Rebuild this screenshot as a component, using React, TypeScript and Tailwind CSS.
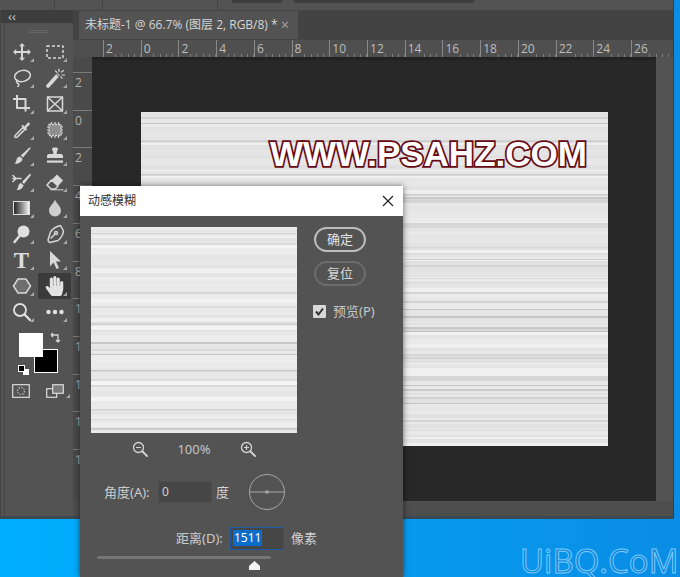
import React from "react";
import { FaHandPaper } from "react-icons/fa";

const UI = { fontFamily: '"Open Sans","Noto Sans CJK SC",sans-serif' };
const CJK = { fontFamily: '"Noto Sans","Noto Sans CJK SC",sans-serif' };

function stripes(seed: number, height: number, base: number) {
  let s = seed;
  const rnd = () => {
    s = (s * 1664525 + 1013904223) % 4294967296;
    return s / 4294967296;
  };
  const stops: string[] = [];
  let y = 0;
  while (y < height) {
    const r = rnd();
    let h = 1 + Math.floor(rnd() * 4);
    let v = base + Math.floor(rnd() * 12) - 4;
    if (r < 0.09) {
      v = base - 36 + Math.floor(rnd() * 14);
      h = 1 + Math.floor(rnd() * 2);
    } else if (r < 0.26) {
      v = base - 18 + Math.floor(rnd() * 8);
      h = 1 + Math.floor(rnd() * 2);
    } else if (r > 0.86) {
      v = Math.min(248, base + 12);
    }
    const c = `rgb(${v},${v},${v})`;
    stops.push(`${c} ${y}px`, `${c} ${y + h}px`);
    y += h;
  }
  return `linear-gradient(to bottom, ${stops.join(",")})`;
}

const S = { stroke: "#d8d8d8", fill: "none", strokeWidth: 1.5, strokeLinecap: "round" as const, strokeLinejoin: "round" as const };
const F = { fill: "#d8d8d8" };

const icons: Record<string, React.ReactNode> = {
  move: (
    <g>
      <path d="M10 3v14M3 10h14" {...S} strokeWidth={2} />
      <path d="M10 1l3 3.2H7zM10 19l3-3.2H7zM1 10l3.2-3v6zM19 10l-3.2-3v6z" {...F} />
    </g>
  ),
  marquee: <rect x="2" y="4" width="16" height="12" {...S} strokeLinecap="butt" strokeDasharray="3 2" />,
  lasso: (
    <g {...S}>
      <ellipse cx="10.5" cy="8" rx="8" ry="5.5" transform="rotate(-12 10.5 8)" />
      <path d="M5 12c-1 2 0 3 1 3.5s1 2 0 3" />
    </g>
  ),
  wand: (
    <g>
      <path d="M3 18L12 8" stroke="#d8d8d8" strokeWidth="3.6" strokeLinecap="round" />
      <path d="M12 8l2-2" stroke="#9a9a9a" strokeWidth="3.6" />
      <path d="M14 1v2.6M16.5 4l2-1.5M17 7h2.6M10.5 3l1.4 1.4M17 10l-1-1" {...S} strokeWidth={1.2} />
    </g>
  ),
  crop: <path d="M5 1v13h13M1 5h12.5v12.5" {...S} strokeWidth={2} strokeLinecap="butt" />,
  frame: (
    <g {...S} strokeLinecap="butt">
      <rect x="2.5" y="3" width="15" height="14" />
      <path d="M2.5 3l15 14M17.5 3l-15 14" />
    </g>
  ),
  dropper: (
    <g>
      <path d="M11 7.5L3.6 15c-1 1.2-1 2.6.2 2.4 1 0 1.4-.3 2-1L13 9.4z" {...S} />
      <path d="M11 5l1.5 1.5 3-3.5c1.2-1.6 3.4.7 1.8 2L14 8l1.4 1.4-1.3 1.1-5-5z" {...F} />
    </g>
  ),
  chip: (
    <g>
      <rect x="4" y="4.5" width="12" height="11" fill="#8d8d8d" stroke="#d8d8d8" strokeWidth="1.4" strokeDasharray="2 1" />
      <path d="M6.5 2v2M10 2v2M13.5 2v2M6.5 16v2M10 16v2M13.5 16v2M2 7h2M2 10h2M2 13h2M16 7h2M16 10h2M16 13h2" stroke="#d8d8d8" strokeWidth="1.2" />
    </g>
  ),
  brush: (
    <g {...F}>
      <path d="M17.5 1.5c.8-.3 1.3.3 1 1L11 11.5 8.8 9.5z" />
      <path d="M8 10.5l2.5 2.2c-.2 3-4 5.5-8 5 2-1.500 1.500-3.200 2.300-5 .7-1.200 2-2 3.200-2.200z" />
    </g>
  ),
  stamp: (
    <g {...F}>
      <path d="M7 2.5c0-1.500 6-1.500 6 0 0 2-1.500 3-1.300 5.500H16c1.500 0 2 1 2 2.500v1.500H2v-1.500C2 9 2.500 8 4 8h4.300C8.500 5.500 7 4.500 7 2.500z" />
      <rect x="2" y="14.5" width="16" height="2.2" />
    </g>
  ),
  history: (
    <g>
      <path d="M18 1.5L10 10l2 2 7-9z" {...F} />
      <path d="M9 11l2.5 2.2c-.3 2.500-3 5-7 4.800 1.500-1.300 1.500-3 2-4.500.5-1.300 1.500-2.200 2.500-2.500z" {...F} />
      <path d="M1 6.5h8M1 3.500l3 3-3 3" {...S} strokeWidth={1.6} />
    </g>
  ),
  eraser: (
    <g>
      <path d="M12 2.5l6 6-5 5.500-6.500-6z" {...F} />
      <path d="M6.5 8l6.500 6-2.800 3H6L2 13z" {...S} />
      <path d="M6 17.8h12" {...S} strokeWidth={1} />
    </g>
  ),
  drop: <path d="M10 1.5c1 3.500 6 7 6 11a6 6 0 0 1-12 0c0-4 5-7.500 6-11z" fill="#cfcfcf" />,
  dodge: (
    <g>
      <circle cx="11.5" cy="7.5" r="6" fill="#e0e0e0" />
      <path d="M7.5 12L2.5 18" stroke="#e0e0e0" strokeWidth="2.4" strokeLinecap="round" />
    </g>
  ),
  pen: (
    <g {...S}>
      <path d="M15.5 1.5l3 5.500c-.5 4-3 7.500-5.500 9.500l-8 2c-1.500-.5-2-1.500-2-2.500l2.500-8c2-3 6-5.500 10-6.500z" />
      <path d="M6 14l3.500-3.500" />
      <circle cx="11" cy="9" r="1.5" />
    </g>
  ),
  arrow: <path d="M5 1l11 10.500h-5l3 6.500-2.500 1-3-6.500L5 16.500z" fill="#d8d8d8" />,
  hexagon: <path d="M6 3h8l4.500 7-4.500 7H6l-4.500-7z" fill="#6e6e6e" stroke="#d8d8d8" strokeWidth="1.5" />,
  zoom: (
    <g>
      <circle cx="8" cy="8" r="6" fill="none" stroke="#e0e0e0" strokeWidth="1.8" />
      <path d="M12.5 12.5L18 18" stroke="#e0e0e0" strokeWidth="2.4" strokeLinecap="round" />
    </g>
  ),
  dots: (
    <g fill="#e0e0e0">
      <circle cx="3.5" cy="10" r="2.2" />
      <circle cx="10" cy="10" r="2.2" />
      <circle cx="16.5" cy="10" r="2.2" />
    </g>
  ),
};

function Corner() {
  return (
    <span className="absolute right-[4px] bottom-[3px] w-0 h-0 border-l-[4px] border-l-transparent border-b-[4px] border-b-[#a8a8a8]" />
  );
}

function Tool({ name, active }: { name: string; active?: boolean }) {
  return (
    <div className={`relative w-[33px] h-[26px] flex items-center justify-center ${active ? "bg-[#3b3b3b] rounded-[1px]" : ""}`}>
      {name === "T" ? (
        <span className="text-[23px] leading-none font-bold text-[#dcdcdc]" style={{ fontFamily: '"Liberation Serif",serif' }}>
          T
        </span>
      ) : name === "hand" ? (
        <FaHandPaper className="w-[19px] h-[20px] text-[#e4e4e4]" />
      ) : name === "gradient" ? (
        <div className="w-[17px] h-[14px] border border-[#dcdcdc] bg-gradient-to-r from-[#2a2a2a] to-[#f4f4f4]" />
      ) : (
        <svg width="20" height="20" viewBox="0 0 20 20">
          {icons[name]}
        </svg>
      )}
      <Corner />
    </div>
  );
}

const tools: [string, string][] = [
  ["move", "marquee"],
  ["lasso", "wand"],
  ["crop", "frame"],
  ["dropper", "chip"],
  ["brush", "stamp"],
  ["history", "eraser"],
  ["gradient", "drop"],
  ["dodge", "pen"],
  ["T", "arrow"],
  ["hexagon", "hand"],
  ["zoom", "dots"],
];

function Toolbar() {
  return (
    <div className="w-[73px] h-full shrink-0 flex border-l border-[#464646] pl-[3px]">
      <div className="flex-1 border-l border-[#464646] flex flex-col">
        <div className="h-[13px] -ml-[4px] bg-[#3d3d3d] flex items-center pl-[7px] text-[13px] leading-none text-[#c8c8c8]" style={UI}>
          ‹‹
        </div>
        <div className="h-[16px] flex items-center justify-center">
          <div className="w-[20px] h-[3px] border-y border-[#666666]" />
        </div>
        <div className="grid grid-cols-[33px_33px]">
          {tools.flat().map((t) => (
            <Tool key={t} name={t} active={t === "hand"} />
          ))}
        </div>
        <div className="relative h-[58px]">
          <div className="absolute left-[29px] top-[24px] w-[24px] h-[24px] bg-black border border-white" />
          <div className="absolute left-[14px] top-[8px] w-[24px] h-[24px] bg-white" />
          <svg className="absolute left-[45px] top-[7px]" width="12" height="12" viewBox="0 0 12 12">
            <path d="M1 3h7v6M1 3l2-2M1 3l2 2M8 10l-2-2M8 10l2-2" fill="none" stroke="#d8d8d8" strokeWidth="1.3" />
          </svg>
          <div className="absolute left-[18px] top-[44px] w-[6px] h-[6px] bg-white" />
          <div className="absolute left-[13px] top-[40px] w-[7px] h-[7px] bg-black border border-white" />
        </div>
        <div className="flex items-center h-[16px] pl-[7px] gap-[16px]">
          <svg width="18" height="14" viewBox="0 0 18 14">
            <rect x="0.7" y="0.7" width="16.6" height="12.6" fill="none" stroke="#dcdcdc" strokeWidth="1.2" />
            <circle cx="9" cy="7" r="3.5" fill="none" stroke="#bcbcbc" strokeWidth="1.2" strokeDasharray="1.5 1.2" />
          </svg>
          <div className="relative">
            <svg width="18" height="14" viewBox="0 0 18 14">
              <rect x="0.7" y="4.7" width="10" height="8.6" fill="#535353" stroke="#dcdcdc" strokeWidth="1.2" />
              <rect x="6.7" y="0.7" width="10.6" height="8.6" fill="#7a7a7a" stroke="#dcdcdc" strokeWidth="1.2" />
            </svg>
            <span className="absolute -right-[6px] bottom-0 w-0 h-0 border-l-[4px] border-l-transparent border-b-[4px] border-b-[#a8a8a8]" />
          </div>
        </div>
      </div>
    </div>
  );
}

const topLabels = ["2", "0", "2", "4", "6", "8", "10", "12", "14", "16", "18", "20", "22", "24", "26"];
const leftLabels = ["2", "0", "2", "4", "6", "8", "10", "12", "14", "16", "18"];

function TopRuler() {
  return (
    <div className="h-[17px] shrink-0 bg-[#4f4f4f] flex pl-[30px] overflow-hidden">
      {topLabels.map((l, i) => (
        <div
          key={i}
          className="w-[37.72px] shrink-0 h-full border-l border-[#8a8a8a] pl-[2px] text-[12px] leading-[17px] text-[#bdbdbd] bg-[repeating-linear-gradient(to_right,transparent_0,transparent_5.2px,#7d7d7d_5.2px,#7d7d7d_6.2px)] bg-[length:100%_3px] bg-bottom bg-no-repeat"
          style={UI}
        >
          <span className="bg-[#4f4f4f]">{l}</span>
        </div>
      ))}
    </div>
  );
}

function LeftRuler() {
  return (
    <div className="w-[19px] shrink-0 bg-[#4a4a4a] pt-[15px] overflow-hidden">
      {leftLabels.map((l, i) => (
        <div key={i} className="h-[37.72px] border-t border-[#7a7a7a] w-full pl-[2px] pt-px text-[12px] leading-[18px] text-[#b0b0b0]" style={UI}>
          {l}
        </div>
      ))}
    </div>
  );
}

function ZoomGlass({ plus }: { plus?: boolean }) {
  return (
    <svg width="16" height="16" viewBox="0 0 16 16" fill="none" stroke="#d4d4d4">
      <circle cx="6.5" cy="6.5" r="5" strokeWidth="1.3" />
      <path d="M10.5 10.5L15 15" strokeWidth="1.8" strokeLinecap="round" />
      <path d={plus ? "M4 6.5h5M6.500 4v5" : "M4 6.5h5"} strokeWidth="1.1" />
    </svg>
  );
}

function Dialog() {
  return (
    <div className="absolute left-[80px] top-[186px] w-[323px] h-[391px] bg-[#535353] shadow-[0_0_6px_rgba(0,0,0,0.55)] flex flex-col text-[13px] text-[#d2d2d2]" style={CJK}>
      <div className="h-[30px] shrink-0 bg-white flex items-center justify-between pl-[8px] pr-[8px] text-[12px] text-[#303030]">
        <span className="leading-none">动感模糊</span>
        <svg width="14" height="14" viewBox="0 0 14 14">
          <path d="M2 2l10 10M12 2L2 12" stroke="#222" strokeWidth="1.2" />
        </svg>
      </div>
      <div className="flex pl-[11px] pt-[11px]">
        <div className="w-[206px] h-[206px] shrink-0" style={{ backgroundImage: stripes(77, 206, 232) }} />
        <div className="ml-[17px] flex flex-col">
          <div className="w-[52px] h-[25px] rounded-full border-2 border-[#bcbcbc] flex items-center justify-center text-[#e4e4e4]">确定</div>
          <div className="w-[52px] h-[25px] mt-[9px] rounded-full border-2 border-[#6c6c6c] flex items-center justify-center text-[#d8d8d8]">复位</div>
          <div className="mt-[19px] -ml-[1px] flex items-center gap-[7px]">
            <div className="w-[13px] h-[13px] bg-[#d8d8d8] rounded-[1px] flex items-center justify-center">
              <svg width="11" height="11" viewBox="0 0 11 11">
                <path d="M2 5.5l2.5 3L9 2.5" fill="none" stroke="#333" strokeWidth="2" />
              </svg>
            </div>
            <span className="leading-none text-[#c8c8c8] whitespace-nowrap">预览(P)</span>
          </div>
        </div>
      </div>
      <div className="flex items-center h-[16px] mt-[8px] pl-[52px]">
        <ZoomGlass />
        <span className="w-[92px] text-center text-[#c4c4c4] leading-none">100%</span>
        <ZoomGlass plus />
      </div>
      <div className="flex items-center mt-[16px] pl-[24px] h-[38px]">
        <span className="w-[54px] leading-none text-[#cccccc] whitespace-nowrap">角度(A):</span>
        <div className="w-[54px] h-[22px] bg-[#464646] border border-[#4e4e4e] pl-[3px] text-[12px] leading-[20px] text-[#cfcfcf]">0</div>
        <span className="ml-[4px] leading-none">度</span>
        <svg className="ml-[19px]" width="38" height="38" viewBox="0 0 38 38">
          <circle cx="19" cy="19" r="17.5" fill="none" stroke="#a8a8a8" strokeWidth="1" />
          <path d="M2 19h34" stroke="#a8a8a8" strokeWidth="1" />
          <circle cx="19" cy="19" r="1.8" fill="#a8a8a8" />
        </svg>
      </div>
      <div className="flex items-center mt-[15px] pl-[96px] h-[24px]">
        <span className="w-[54px] leading-none text-[#cccccc] whitespace-nowrap">距离(D):</span>
        <div className="w-[54px] h-[23px] bg-[#464646] border border-[#1d5aa6] pl-[2px] flex items-center text-[12px]">
          <span className="bg-[#0a6ccb] text-white leading-[16px] px-px">1511</span>
        </div>
        <span className="ml-[7px] leading-none">像素</span>
      </div>
      <div className="relative mt-[6px] ml-[17px] w-[174px] h-[3px] bg-[#767676] rounded-full">
        <svg className="absolute left-[151px] top-[5px]" width="13" height="9" viewBox="0 0 13 9">
          <path d="M6.5 0L12 5v4H1V5z" fill="#f2f2f2" />
        </svg>
      </div>
    </div>
  );
}

export default function App() {
  return (
    <div className="relative w-[680px] h-[577px] overflow-hidden bg-gradient-to-r from-[#00aeff] to-[#0a8de4]">
      <div className="w-[674px] h-[519px] bg-[#535353] flex flex-col border-b-[3px] border-[#3b4a52] border-r border-r-[#3c3c3c]">
        <div className="h-[10px] shrink-0 flex">
          <div className="w-[55px] border-r border-[#464646]" />
          <div className="w-[48px] border-r border-[#464646]" />
          <div className="w-[115px] border-r border-[#464646]" />
          <div className="ml-[14px] w-[50px] h-[3px] bg-[#3e3e3e]" />
          <div className="ml-[12px] w-[180px] h-[3px] bg-[#3e3e3e]" />
        </div>
        <div className="flex-1 flex min-h-0">
          <Toolbar />
          <div className="flex-1 min-w-0 flex flex-col">
            <div className="h-[30px] shrink-0 bg-[#434343] pl-[6px] flex items-stretch">
              <div className="w-[219px] bg-[#535353] flex items-center justify-between pl-[6px] pr-[9px] my-px text-[12px] text-[#d6d6d6]" style={UI}>
                <span className="whitespace-nowrap">未标题-1 @ 66.7% (图层 2, RGB/8) *</span>
                <span className="text-[14px] leading-none text-[#a8a8a8]">×</span>
              </div>
            </div>
            <TopRuler />
            <div className="flex-1 min-h-0 flex">
              <LeftRuler />
              <div className="w-[564px] shrink-0 bg-[#282828] border-t-[3px] border-[#222222] pl-[49px] pt-[52px]">
                <div className="w-[467px] h-[334px] pl-[129px] pt-[22px]" style={{ backgroundImage: stripes(1234, 334, 228) }}>
                  <div
                    className="text-[35px] leading-[40px] font-bold text-white whitespace-nowrap [-webkit-text-stroke:3.5px_#660812] [paint-order:stroke_fill]"
                    style={{ fontFamily: '"Liberation Sans",sans-serif' }}
                  >
                    WWW.PSAHZ.COM
                  </div>
                </div>
              </div>
              <div className="flex-1 bg-[#535353]" />
            </div>
            <div className="h-[15px] shrink-0 bg-[#4e4e4e] border-t border-[#505050]" />
          </div>
        </div>
      </div>
      <Dialog />
      <div
        className="absolute left-[520px] top-[544px] text-[33px] leading-[33px] whitespace-nowrap text-[#0f86dc] [-webkit-text-stroke:1px_#7ccbff]"
        style={{ fontFamily: '"Open Sans",sans-serif' }}
      >
        UiBQ.CoM
      </div>
    </div>
  );
}
